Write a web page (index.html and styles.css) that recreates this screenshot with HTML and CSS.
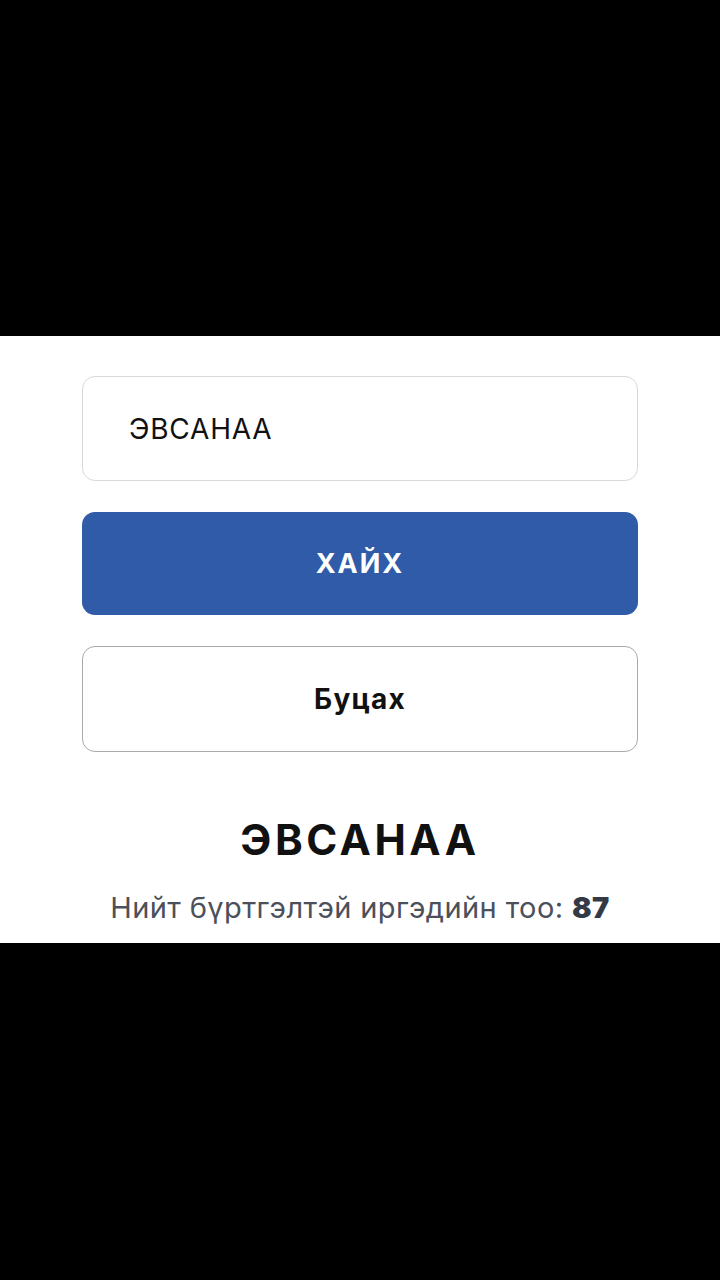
FILE: index.html
```html
<!DOCTYPE html>
<html lang="mn">
<head>
<meta charset="utf-8">
<link rel="stylesheet" href="styles.css">
</head>
<body>
<div class="screen">
  <div class="band"></div>
  <main class="panel">
    <div class="field">ЭВСАНАА</div>
    <button class="btn btn-primary">ХАЙХ</button>
    <button class="btn btn-outline">Буцах</button>
    <h1 class="title">ЭВСАНАА</h1>
    <p class="stats">Нийт бүртгэлтэй иргэдийн тоо: <b>87</b></p>
  </main>
  <div class="band band-bottom"></div>
</div>
</body>
</html>
```
FILE: styles.css
```css
html, body {
  margin: 0;
  padding: 0;
  background: #000;
  font-family: Inter, Roboto, "Noto Sans", sans-serif;
}
.screen {
  width: 720px;
  height: 1280px;
  display: flex;
  flex-direction: column;
}
.band {
  height: 336px;
  background: #000;
}
.band-bottom {
  flex: 1;
}
.panel {
  background: #fff;
  height: 607px;
  box-sizing: border-box;
  padding: 40px 82px 0;
  display: flex;
  flex-direction: column;
}
.field {
  height: 105px;
  box-sizing: border-box;
  border: 1.5px solid #d9d9d9;
  border-radius: 13px;
  padding-left: 46px;
  display: flex;
  align-items: center;
  font-size: 28px;
  letter-spacing: 0.8px;
  color: #111;
}
.btn {
  font-family: Inter, Roboto, "Noto Sans", sans-serif;
  height: 103px;
  border-radius: 13px;
  font-weight: 700;
  font-size: 27px;
  cursor: pointer;
}
.btn-primary {
  margin-top: 31px;
  background: #2f5ba8;
  border: none;
  color: #fff;
  letter-spacing: 2px;
}
.btn-outline {
  margin-top: 31px;
  height: 106px;
  background: #fff;
  border: 1.5px solid #a9a9b0;
  color: #111;
  font-size: 28px;
  letter-spacing: 1.2px;
}
.title {
  margin: 62px 0 0;
  text-align: center;
  font-size: 42px;
  font-weight: 700;
  letter-spacing: 3.5px;
  color: #111;
  line-height: 52px;
}
.stats {
  margin: 24px 0 0;
  text-align: center;
  font-size: 29px;
  letter-spacing: 0.4px;
  color: #4b505b;
}
.stats b {
  color: #333a46;
  font-weight: 900;
}
```
